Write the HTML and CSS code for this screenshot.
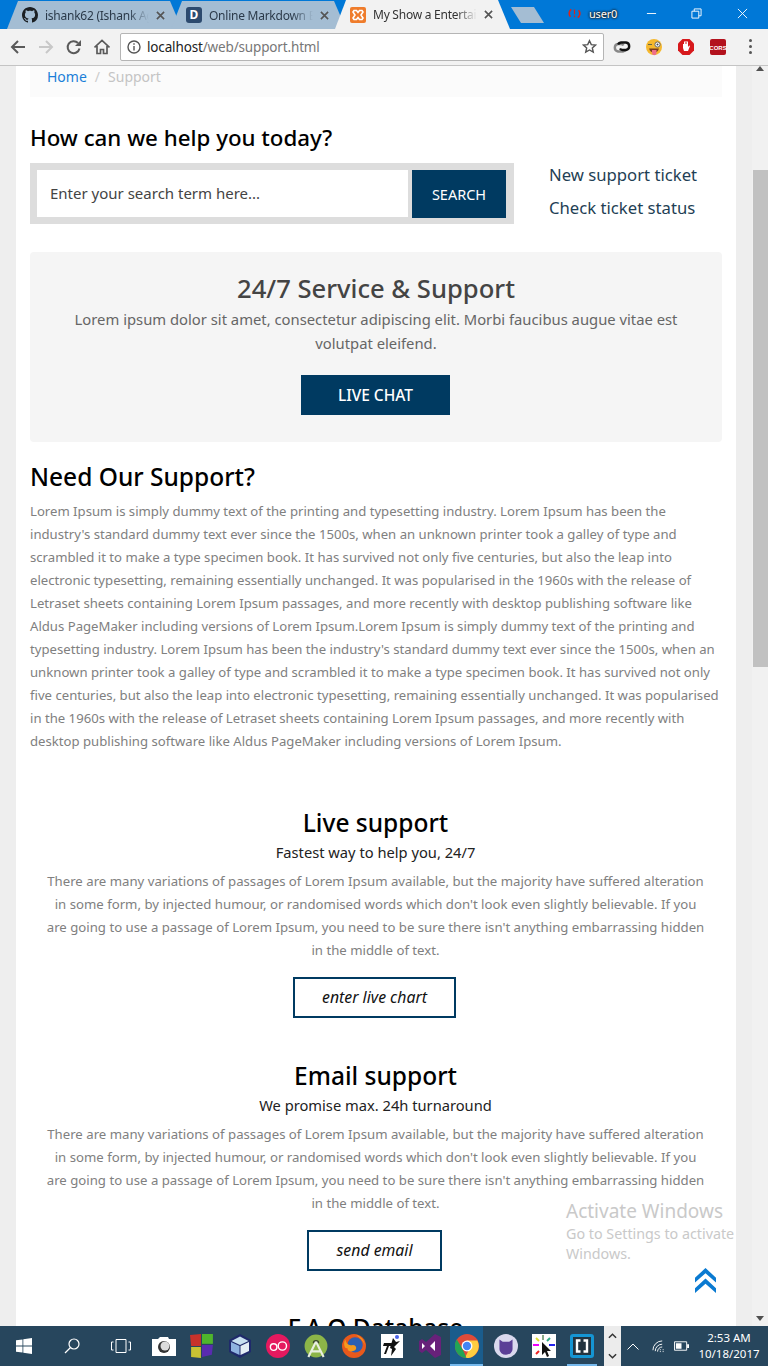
FILE: index.html
```html
<!DOCTYPE html>
<html lang="en">
<head>
<meta charset="utf-8">
<title>Support</title>
<link rel="stylesheet" href="styles.css">
</head>
<body>
<div class="screen">
  <header class="titlebar">
    <div class="tabs">
      <div class="tab tab-first">
        <svg class="fav" viewBox="0 0 16 16"><path fill="#1b1f23" d="M8 0C3.58 0 0 3.58 0 8c0 3.54 2.29 6.53 5.47 7.59.4.07.55-.17.55-.38 0-.19-.01-.82-.01-1.49-2.01.37-2.53-.49-2.69-.94-.09-.23-.48-.94-.82-1.13-.28-.15-.68-.52-.01-.53.63-.01 1.08.58 1.23.82.72 1.21 1.87.87 2.33.66.07-.52.28-.87.51-1.07-1.78-.2-3.64-.89-3.64-3.95 0-.87.31-1.59.82-2.15-.08-.2-.36-1.02.08-2.12 0 0 .67-.21 2.2.82.64-.18 1.32-.27 2-.27.68 0 1.36.09 2 .27 1.53-1.04 2.2-.82 2.2-.82.44 1.1.16 1.92.08 2.12.51.56.82 1.27.82 2.15 0 3.07-1.87 3.75-3.65 3.95.29.25.54.73.54 1.48 0 1.07-.01 1.93-.01 2.2 0 .21.15.46.55.38A8.013 8.013 0 0016 8c0-4.42-3.58-8-8-8z"/></svg>
        <span class="tab-label">ishank62 (Ishank Agarwal)</span>
        <svg class="tab-x" viewBox="0 0 10 10"><path d="M1 1l8 8M9 1L1 9"/></svg>
      </div>
      <div class="tab">
        <span class="fav fav-d">D</span>
        <span class="tab-label">Online Markdown Editor</span>
        <svg class="tab-x" viewBox="0 0 10 10"><path d="M1 1l8 8M9 1L1 9"/></svg>
      </div>
      <div class="tab tab-active">
        <svg class="fav" viewBox="0 0 16 16"><rect width="16" height="16" rx="2" fill="#ef7c2b"/><path fill="none" stroke="#fff" stroke-width="1.6" d="M4 3.5h2.5L8 5.5l1.5-2H12l1 1.5-2 3 2 3-1 1.5H9.500L8 10.500l-1.500 2H4L3 11l2-3-2-3z"/></svg>
        <span class="tab-label">My Show a Entertainment</span>
        <svg class="tab-x" viewBox="0 0 10 10"><path d="M1 1l8 8M9 1L1 9"/></svg>
      </div>
      <div class="newtab"></div>
    </div>
    <div class="winctl">
      <svg class="sync" viewBox="0 0 16 16"><path fill="none" stroke="#d8261c" stroke-width="2" d="M3 12a6 6 0 0 1 1-9M13 4a6 6 0 0 1-1 9"/><path fill="none" stroke="#d8261c" stroke-width="1.500" d="M8 3v6M8 10.500v2"/></svg>
      <span class="user">user0</span>
      <svg class="win-ic win-min" viewBox="0 0 12 12"><path d="M1 6h10"/></svg>
      <svg class="win-ic win-max" viewBox="0 0 12 12"><path d="M1 3.500h7.500v7.500H1zM3.500 3.500V1H11v7.500H8.500"/></svg>
      <svg class="win-ic win-close" viewBox="0 0 12 12"><path d="M1 1l10 10M11 1L1 11"/></svg>
    </div>
  </header>

  <nav class="toolbar">
    <svg class="tool" viewBox="0 0 16 16"><path class="tl" d="M15 8H2M8 2L2 8l6 6"/></svg>
    <svg class="tool tool-dim" viewBox="0 0 16 16"><path class="tl" d="M1 8h13M8 2l6 6-6 6"/></svg>
    <svg class="tool" viewBox="0 0 16 16"><path class="tl" d="M13.500 9.500A6 6 0 1 1 12 4"/><path fill="#5a5a5a" d="M15 1v6H9z"/></svg>
    <svg class="tool" viewBox="0 0 16 16"><path class="tl tl-thin" d="M.5 8.500L8 1.500l7.500 7M3 7v7.500h3.500v-4h3v4H13V7"/></svg>
    <div class="omnibox">
      <svg class="info" viewBox="0 0 14 14"><circle cx="7" cy="7" r="6" fill="none" stroke="#555" stroke-width="1.400"/><path fill="#555" d="M6.300 6h1.400v4.500H6.300zM6.300 3.300h1.400v1.500H6.300z"/></svg>
      <span class="url"><span class="host">localhost</span>/web/support.html</span>
      <svg class="star" viewBox="0 0 16 16"><path fill="none" stroke="#555" stroke-width="1.500" d="M8 1.800l1.900 4.200 4.500.5-3.400 3 1 4.500L8 11.700 4 14l1-4.500-3.400-3 4.500-.5z"/></svg>
    </div>
    <div class="exts">
      <svg class="ext" viewBox="0 0 18 18"><path fill="none" stroke="#888" stroke-width="2.400" d="M10.500 7.500A3 3 0 0 0 8 6H5a3.800 3.800 0 0 0 0 7.500h5a3.800 3.800 0 0 0 3-2"/><path fill="none" stroke="#111" stroke-width="2.400" d="M7 10.500A3 3 0 0 0 10 12h3a3.800 3.800 0 0 0 0-7.500H8a3.800 3.800 0 0 0-3 2"/></svg>
      <svg class="ext" viewBox="0 0 18 18"><circle cx="9" cy="9" r="8" fill="#f5b82e"/><circle cx="12.500" cy="6.500" r="2.600" fill="#fff" stroke="#666"/><circle cx="12.500" cy="6.500" r="1" fill="#444"/><path stroke="#664" fill="none" d="M3 6.500h4"/><path fill="#7a3b1d" d="M4 10.500h10c-1 3-3 4-5 4s-4-1-5-4z"/><path fill="#ee6f8b" d="M7 12h4.500v3a2.200 2.200 0 0 1-4.500 0z"/></svg>
      <svg class="ext" viewBox="0 0 18 18"><path fill="#d7191c" d="M5.500 1h7L17 5.500v7L12.500 17h-7L1 12.500v-7z"/><path fill="#fff" d="M6 6h1V3.500h1V6h.5V3h1v3h.5V3.500h1V9l1.200-1.500.8.500-2 5H7L6 10z"/></svg>
      <svg class="ext" viewBox="0 0 18 18"><rect x="1" y="1" width="16" height="16" rx="2" fill="#b3121d"/><text x="9" y="11.500" class="cors">CORS</text></svg>
    </div>
    <div class="menu"><i></i><i></i><i></i></div>
  </nav>

  <div class="viewport">
    <main class="page">
      <div class="crumbs"><a class="crumb-link">Home</a><span class="crumb-sep">/</span><span class="crumb-cur">Support</span></div>

      <h2 class="help-title">How can we help you today?</h2>
      <div class="help-row">
        <form class="search">
          <div class="search-input">Enter your search term here...</div>
          <div class="search-btn">SEARCH</div>
        </form>
        <div class="help-links">
          <a>New support ticket</a>
          <a>Check ticket status</a>
        </div>
      </div>

      <section class="service">
        <h3>24/7 Service &amp; Support</h3>
        <p>Lorem ipsum dolor sit amet, consectetur adipiscing elit. Morbi faucibus augue vitae est volutpat eleifend.</p>
        <div class="chat-btn">LIVE CHAT</div>
      </section>

      <h2 class="need-title">Need Our Support?</h2>
      <p class="need-text">Lorem Ipsum is simply dummy text of the printing and typesetting industry. Lorem Ipsum has been the industry's standard dummy text ever since the 1500s, when an unknown printer took a galley of type and scrambled it to make a type specimen book. It has survived not only five centuries, but also the leap into electronic typesetting, remaining essentially unchanged. It was popularised in the 1960s with the release of Letraset sheets containing Lorem Ipsum passages, and more recently with desktop publishing software like Aldus PageMaker including versions of Lorem Ipsum.Lorem Ipsum is simply dummy text of the printing and typesetting industry. Lorem Ipsum has been the industry's standard dummy text ever since the 1500s, when an unknown printer took a galley of type and scrambled it to make a type specimen book. It has survived not only five centuries, but also the leap into electronic typesetting, remaining essentially unchanged. It was popularised in the 1960s with the release of Letraset sheets containing Lorem Ipsum passages, and more recently with desktop publishing software like Aldus PageMaker including versions of Lorem Ipsum.</p>

      <section class="block block-live">
        <h2>Live support</h2>
        <h4>Fastest way to help you, 24/7</h4>
        <p>There are many variations of passages of Lorem Ipsum available, but the majority have suffered alteration in some form, by injected humour, or randomised words which don't look even slightly believable. If you are going to use a passage of Lorem Ipsum, you need to be sure there isn't anything embarrassing hidden in the middle of text.</p>
        <div class="outline-btn btn-live">enter live chart</div>
      </section>

      <section class="block block-mail">
        <h2>Email support</h2>
        <h4>We promise max. 24h turnaround</h4>
        <p>There are many variations of passages of Lorem Ipsum available, but the majority have suffered alteration in some form, by injected humour, or randomised words which don't look even slightly believable. If you are going to use a passage of Lorem Ipsum, you need to be sure there isn't anything embarrassing hidden in the middle of text.</p>
        <div class="outline-btn btn-mail">send email</div>
      </section>

      <section class="block block-faq">
        <h2>F.A.Q Database</h2>
      </section>
    </main>
    <div class="scrollbar">
      <span class="arrow-up"></span>
      <div class="thumb"></div>
      <span class="arrow-down"></span>
    </div>
    <div class="activate">
      <div class="act-title">Activate Windows</div>
      <div class="act-sub">Go to Settings to activate Windows.</div>
    </div>
    <svg class="totop" viewBox="0 0 22 26"><path d="M11 0L22 10v5L11 5.500 0 15v-5zM11 11l11 10v5L11 16.500 0 26v-5z"/></svg>
  </div>

  <footer class="taskbar">
    <div class="slot slot-w"><svg class="ti ti-win" viewBox="0 0 16 16"><path fill="#fff" d="M0 2.300l6.500-.9v6.200H0zM7.300 1.300L16 0v7.600H7.300zM0 8.400h6.500v6.200L0 13.700zM7.300 8.400H16V16l-8.700-1.300z"/></svg></div>
    <div class="slot slot-w"><svg class="ti" viewBox="0 0 16 16"><circle cx="10" cy="6" r="5" fill="none" stroke="#fff" stroke-width="1.200"/><path stroke="#fff" stroke-width="1.300" d="M6.500 9.500L1 15"/></svg></div>
    <div class="slot slot-w"><svg class="ti ti-task" viewBox="0 0 20 14"><path fill="none" stroke="#fff" d="M5 .5h10v13H5zM2.500 3H.5v8h2M17.500 3h2v8h-2"/></svg></div>
    <div class="slot"><svg class="ti ti-app" viewBox="0 0 24 20"><path fill="#fff" d="M0 3h6l2-2h8l1 2h7v17H0z"/><circle cx="12" cy="11" r="6" fill="#333"/><circle cx="13" cy="10" r="4.500" fill="#dcdcdc"/></svg></div>
    <div class="slot"><svg class="ti ti-app" viewBox="0 0 22 22"><path fill="#c8322b" d="M0 1l10-1v11H1z"/><path fill="#4fb52c" d="M11 0h10v9H11z"/><path fill="#c9c233" d="M1 12h9v10l-9-1z"/><path fill="#5a2bb0" d="M11 10h10l-1 9-9 2z"/></svg></div>
    <div class="slot"><svg class="ti ti-app" viewBox="0 0 22 24"><path fill="#1f2a6b" d="M11 0l11 6v12l-11 6-11-6V6z"/><path fill="#c7e0f0" d="M11 2.500l8.500 4.500L11 11 2.500 7z"/><path fill="#8fb3e0" d="M2 8l8.500 4v9L2 17z"/><path fill="#e3eef5" d="M20 8l-8.500 4v9l8.500-4z"/></svg></div>
    <div class="slot"><svg class="ti ti-app" viewBox="0 0 22 22"><circle cx="11" cy="11" r="11" fill="#e5195f"/><circle cx="7" cy="12" r="3" fill="none" stroke="#fff" stroke-width="1.300"/><circle cx="15" cy="11" r="3.800" fill="none" stroke="#fff" stroke-width="1.300"/></svg></div>
    <div class="slot"><svg class="ti ti-app" viewBox="0 0 22 22"><circle cx="11" cy="11" r="10.500" fill="#8cb548"/><path fill="#3a4a2a" d="M8 8.500a3 3 0 0 1 6 0z"/><path fill="none" stroke="#e8efe0" stroke-width="2" d="M11 7L4 21M11 7l7 14M6 16h10"/></svg></div>
    <div class="slot"><svg class="ti ti-app" viewBox="0 0 22 22"><circle cx="11" cy="11" r="11" fill="#e8591c"/><circle cx="12" cy="10" r="7" fill="#2b5fb3"/><path fill="#f59a1e" d="M3 5c1 4 3 6 7 5 3 0 4 3 2 5-3 2-7 1-7-2-3 1-4-5-2-8zM13 1c4 1 7 4 8 9-2-4-4-6-8-9z"/></svg></div>
    <div class="slot"><svg class="ti ti-app" viewBox="0 0 22 24"><rect width="22" height="24" fill="#fff"/><path fill="#111" d="M3 9h10l-2 3H8l-3 8H3l3-8H2zM12 4l3 4 4-1-6 6 2 2-5 7 1-7-2-1z"/><circle cx="16" cy="3" r="2" fill="#4a63e8"/></svg></div>
    <div class="slot"><svg class="ti ti-app" viewBox="0 0 22 24"><path fill="#68217a" d="M16 0l6 3v18l-6 3-9-8-4 3-3-2V7l3-2 4 3z"/><path fill="#fff" d="M16 7l-5 5 5 5zM3 9v6l3-3z"/></svg></div>
    <div class="slot slot-active"><svg class="ti ti-app" viewBox="0 0 22 22"><circle cx="11" cy="11" r="11" fill="#dd4b39"/><path fill="#ffcd40" d="M11 6h9.500A11 11 0 0 1 9 21.900L14 12z"/><path fill="#23a455" d="M1.700 5L7 14l3.500 8A11 11 0 0 1 1.700 5z"/><circle cx="11" cy="11" r="5" fill="#fff"/><circle cx="11" cy="11" r="3.800" fill="#4285f4"/></svg></div>
    <div class="slot"><svg class="ti ti-app" viewBox="0 0 22 22"><circle cx="11" cy="11" r="11" fill="#dad9ee"/><path fill="#5b3f97" d="M5 5l3 2h6l3-2v9a6 5 0 0 1-12 0z"/></svg></div>
    <div class="slot"><svg class="ti ti-app" viewBox="0 0 24 24"><rect width="24" height="24" fill="#fff"/><path d="M11 1v5" stroke="#8a8" stroke-width="2"/><path d="M1 11h6" stroke="#e0f" stroke-width="2"/><path d="M17 11h6" stroke="#22e" stroke-width="2"/><path d="M4 4l3 3" stroke="#dd3" stroke-width="2"/><path d="M18 4l-3 3" stroke="#3a8" stroke-width="2"/><path d="M4 20l3-3" stroke="#e22" stroke-width="2"/><path fill="#111" d="M10 8v13l3-3 2 5 2-1-2-5h4z"/></svg></div>
    <div class="slot slot-run"><svg class="ti ti-app" viewBox="0 0 24 24"><rect width="24" height="24" rx="3" fill="#1595d3"/><rect x="3" y="3" width="18" height="18" fill="#23333f"/><path fill="none" stroke="#fff" stroke-width="2.400" d="M10.500 6.500H7v11h3.500M13.500 6.500H17v11h-3.500"/></svg></div>
    <div class="task-scroll">
      <svg class="ts" viewBox="0 0 10 6"><path d="M1 5l4-4 4 4"/></svg>
      <svg class="ts" viewBox="0 0 10 6"><path d="M1 1l4 4 4-4"/></svg>
    </div>
    <div class="tray">
      <svg class="tr tr-up" viewBox="0 0 12 7"><path fill="none" stroke="#fff" d="M.5 6.500L6 1l5.500 5.500"/></svg>
      <svg class="tr tr-wifi" viewBox="0 0 14 14"><path fill="none" stroke="#fff" d="M1 11a10 10 0 0 1 10-10M3.500 12a7.500 7.500 0 0 1 7.500-7.500M6 12.500a5 5 0 0 1 5-5"/><path fill="none" stroke="#fff" stroke-dasharray="1 1" d="M9 13V9M12 13V9"/></svg>
      <svg class="tr tr-bat" viewBox="0 0 16 10"><path fill="none" stroke="#fff" d="M.5.500h13v9H.500z"/><path fill="#fff" d="M2 2h6v6H2zM14 3h2v4h-2z"/></svg>
      <div class="clock"><div>2:53 AM</div><div>10/18/2017</div></div>
    </div>
  </footer>
</div>
</body>
</html>
```

FILE: styles.css
```css
* { box-sizing: border-box; }
html, body { margin: 0; padding: 0; }
body { font-family: "Noto Sans", "Open Sans", sans-serif; background: #eee; }
h2, h3, h4, p { margin: 0; font-weight: 400; }
a { cursor: pointer; }

.screen { width: 768px; height: 1366px; display: flex; flex-direction: column; overflow: hidden; }

/* Title bar */
.titlebar { height: 29px; flex: none; background: #0078d7; display: flex; justify-content: space-between; }
.tabs { display: flex; align-items: flex-end; padding-left: 7px; }
.tab { width: 175px; height: 28px; margin-right: -11px; padding: 0 17px 0 15px; display: flex; align-items: center; gap: 7px; background: #a4bdd3; clip-path: polygon(0 100%, 11px 0, 163px 0, 175px 100%); font-size: 12px; letter-spacing: -.25px; color: #2b3a4a; }
.tab-active { background: #f2f2f2; color: #333; position: relative; z-index: 1; height: 29px; }
.fav { width: 16px; height: 16px; flex: none; }
.fav-d { background: #2c4a6e; border-radius: 3px; color: #fff; font-size: 12px; line-height: 16px; text-align: center; font-weight: 700; letter-spacing: 0; }
.tab-label { flex: 1; min-width: 0; white-space: nowrap; overflow: hidden; -webkit-mask-image: linear-gradient(90deg, #000 80%, transparent); mask-image: linear-gradient(90deg, #000 80%, transparent); }
.tab-x { width: 9px; height: 9px; flex: none; stroke: #555; stroke-width: 1.800; fill: none; }
.newtab { width: 33px; height: 16px; margin: 0 0 6px 12px; background: #a4bdd3; clip-path: polygon(0 0, 23px 0, 33px 100%, 10px 100%); align-self: flex-end; }
.winctl { display: flex; align-items: center; height: 26px; }
.sync { width: 13px; height: 13px; margin-right: 8px; }
.user { width: 27px; margin-right: 30px; font-size: 11px; line-height: 13px; color: #fff; letter-spacing: -.2px; text-shadow: 0 0 2px #222, 0 0 2px #222, 0 0 3px #222; }
.win-ic { width: 11px; height: 11px; fill: none; stroke: #fff; stroke-width: 1; }
.win-min { margin-right: 34px; }
.win-max { margin-right: 35px; }
.win-close { margin-right: 20px; }

/* Toolbar */
.toolbar { height: 37px; flex: none; background: #f2f2f2; border-bottom: 1px solid #c4c4c4; display: flex; align-items: center; padding: 0 0 1px 10px; }
.tool { width: 16px; height: 16px; margin-right: 12px; flex: none; }
.tl { fill: none; stroke: #5a5a5a; stroke-width: 2; }
.tl-thin { stroke-width: 1.700; }
.tool-dim .tl { stroke: #c8c8c8; }
.omnibox { width: 484px; height: 28px; margin-left: -2px; background: #fff; border: 1px solid #b5b5b5; border-radius: 2px; display: flex; align-items: center; padding: 0 6px; }
.info { width: 14px; height: 14px; margin-right: 6px; flex: none; }
.url { flex: 1; font-size: 13.500px; color: #777; letter-spacing: -.15px; }
.host { color: #222; }
.star { width: 15px; height: 15px; flex: none; }
.exts { display: flex; margin-left: 9px; gap: 14px; }
.ext { width: 18px; height: 18px; flex: none; }
.cors { font-family: "Liberation Sans", sans-serif; font-size: 6px; font-weight: 700; fill: #fff; text-anchor: middle; }
.menu { margin-left: 22px; display: flex; flex-direction: column; gap: 3px; }
.menu i { width: 3px; height: 3px; background: #555; border-radius: 50%; display: block; }

/* Viewport */
.viewport { flex: 1; min-height: 0; position: relative; display: flex; overflow: hidden; background: #eee; }
.page { width: 720px; margin: 0 16px; background: #fff; padding: 0 14px; flex: none; overflow: hidden; }
.scrollbar { width: 16px; flex: none; background: #f1f1f1; display: flex; flex-direction: column; align-items: center; position: absolute; right: 0; top: 0; bottom: 0; }
.arrow-up { border: 4px solid transparent; border-top: 0; border-bottom: 5px solid #505050; }
.thumb { width: 15px; height: 497px; margin-top: 99px; background: #c1c1c1; }
.arrow-down { margin-top: auto; margin-bottom: 5px; border: 4px solid transparent; border-bottom: 0; border-top: 5px solid #505050; }

.crumbs { height: 31px; background: #fbfbfb; padding: 1px 17px 0; font-size: 14px; line-height: 20px; }
.crumb-link { color: #1b7fd8; }
.crumb-sep { color: #ccc; margin: 0 8px; }
.crumb-cur { color: #c4c4c4; }

.help-title { margin-top: 26px; font-size: 22.300px; line-height: 30px; font-weight: 500; color: #000; }
.help-row { margin-top: 10px; display: flex; }
.search { width: 484px; height: 61px; background: #ddd; padding: 7px 8px 6px 7px; display: flex; gap: 4px; }
.search-input { width: 371px; height: 47px; background: #fff; padding-left: 13px; font-size: 15px; line-height: 47px; color: #444; }
.search-btn { width: 94px; height: 48px; background: #003a61; color: #fff; font-size: 14.500px; line-height: 48px; text-align: center; }
.help-links { margin-left: 35px; display: flex; flex-direction: column; gap: 9px; font-size: 16.700px; line-height: 24px; color: #1f3f55; }

.service { margin-top: 28px; height: 190px; background: #f5f5f5; border-radius: 4px; padding: 19px 30px 0; text-align: center; }
.service h3 { font-size: 25.600px; line-height: 36px; font-weight: 500; color: #444; }
.service p { font-size: 14.800px; line-height: 24px; color: #666; }
.chat-btn { width: 149px; height: 40px; margin: 20px 0 0 241px; background: #003a61; color: #fff; font-size: 15.500px; line-height: 40px; font-weight: 500; }

.need-title { margin-top: 19px; font-size: 24.500px; line-height: 32px; font-weight: 500; color: #000; }
.need-text { margin-top: 7px; font-size: 13.150px; line-height: 23px; color: #808080; }

.block { text-align: center; padding: 0 15.500px 0 14.500px; }
.block h2 { font-size: 24.500px; line-height: 32px; font-weight: 500; color: #000; }
.block h4 { font-size: 14.700px; line-height: 22px; color: #222; margin-top: 2px; }
.block p { font-size: 13.200px; line-height: 23px; color: #808080; margin-top: 7px; }
.block-live { margin-top: 54px; }
.block-mail { margin-top: 42px; }
.block-faq { margin-top: 41px; }
.outline-btn { height: 41px; margin-top: 15px; border: 2px solid #003a61; font-size: 15.800px; font-style: italic; line-height: 37px; color: #111; }
.btn-live { width: 163px; margin-left: 248.500px; }
.btn-mail { width: 135px; margin-left: 262.500px; }

.activate { position: absolute; left: 566px; top: 1133px; width: 172px; color: #c9c9c9; }
.act-title { font-size: 19px; line-height: 24px; }
.act-sub { font-size: 14.300px; line-height: 20px; margin-top: 1px; }
.totop { position: absolute; left: 695px; top: 1202px; width: 21px; height: 25px; fill: #0a7ad1; }

/* Taskbar */
.taskbar { height: 40px; flex: none; background: #27465d; display: flex; align-items: center; }
.slot { width: 38px; height: 40px; flex: none; display: flex; align-items: center; justify-content: center; }
.slot-w { width: 48px; }
.taskbar .slot-w:nth-child(3) { width: 49px; }
.ti { width: 16px; height: 16px; }
.ti-task { width: 20px; height: 14px; }
.ti-app { width: 24px; height: 24px; }
.slot-active { background: #1a5c8c; box-shadow: inset 0 -2px 0 #76b9ed; width: 33px; margin: 0 4px 0 1px; }
.slot-run { width: 30px; margin: 0 4px; box-shadow: inset 0 -2px 0 #76b9ed; }
.task-scroll { width: 17px; height: 40px; margin-left: 3px; background: #ececec; display: flex; flex-direction: column; justify-content: space-around; align-items: center; }
.ts { width: 9px; height: 6px; fill: none; stroke: #333; stroke-width: 1.600; }
.tray { flex: 1; display: flex; align-items: center; padding-left: 6px; color: #fff; }
.tr { flex: none; }
.tr-up { width: 12px; height: 7px; }
.tr-wifi { width: 13px; height: 13px; margin-left: 13px; }
.tr-bat { width: 15px; height: 10px; margin-left: 9px; }
.clock { width: 62px; margin-left: 9px; text-align: center; font-size: 11.500px; line-height: 16px; }
```
